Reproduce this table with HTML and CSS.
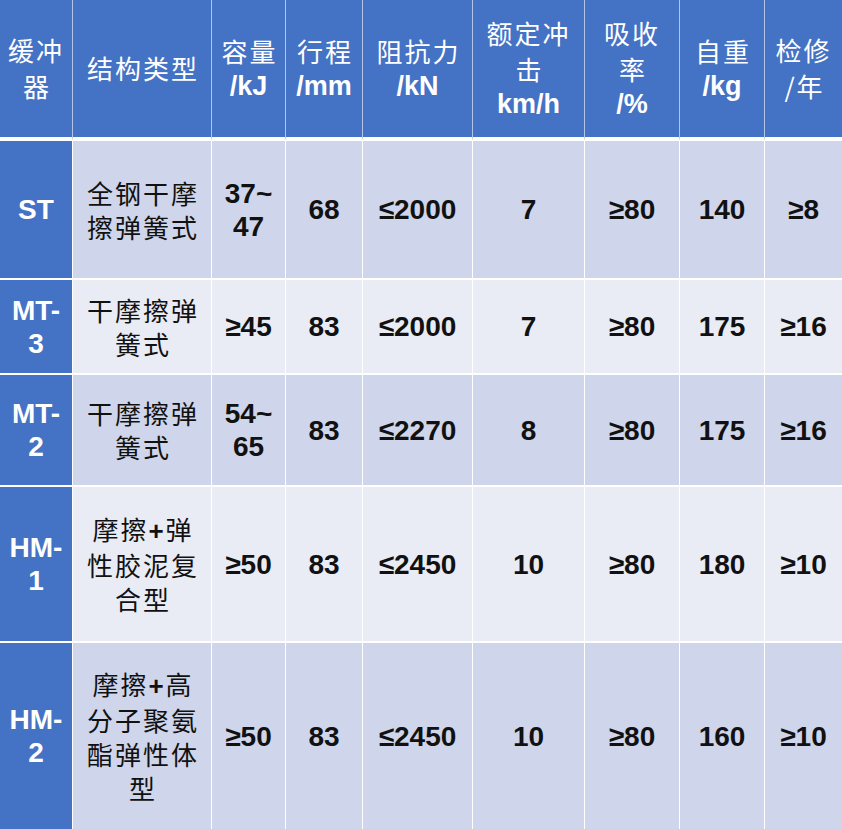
FILE: index.html
```html
<!DOCTYPE html>
<html lang="zh-CN">
<head>
<meta charset="utf-8">
<title>缓冲器参数表</title>
<link rel="stylesheet" href="styles.css">
</head>
<body>
<table class="spec">
  <colgroup>
    <col class="c1"><col class="c2"><col class="c3"><col class="c4"><col class="c5"><col class="c6"><col class="c7"><col class="c8"><col class="c9">
  </colgroup>
  <thead>
    <tr class="head">
      <th><span class="zh">缓冲<br>器</span></th>
      <th><span class="zh">结构类型</span></th>
      <th><span class="zh">容量</span><br><b>/kJ</b></th>
      <th><span class="zh">行程</span><br><b>/mm</b></th>
      <th><span class="zh">阻抗力</span><br><b>/kN</b></th>
      <th><span class="zh">额定冲<br>击</span><br><b>km/h</b></th>
      <th><span class="zh">吸收<br>率</span><br><b>/%</b></th>
      <th><span class="zh">自重</span><br><b>/kg</b></th>
      <th><span class="zh">检修<br>/年</span></th>
    </tr>
  </thead>
  <tbody>
    <tr class="r1 dark">
      <th>ST</th>
      <td class="type">全钢干摩<br>擦弹簧式</td>
      <td>37~<br>47</td><td>68</td><td>≤2000</td><td>7</td><td>≥80</td><td>140</td><td>≥8</td>
    </tr>
    <tr class="r2 light">
      <th>MT-<br>3</th>
      <td class="type">干摩擦弹<br>簧式</td>
      <td>≥45</td><td>83</td><td>≤2000</td><td>7</td><td>≥80</td><td>175</td><td>≥16</td>
    </tr>
    <tr class="r3 dark">
      <th>MT-<br>2</th>
      <td class="type">干摩擦弹<br>簧式</td>
      <td>54~<br>65</td><td>83</td><td>≤2270</td><td>8</td><td>≥80</td><td>175</td><td>≥16</td>
    </tr>
    <tr class="r4 light">
      <th>HM-<br>1</th>
      <td class="type">摩擦<b>+</b>弹<br>性胶泥复<br>合型</td>
      <td>≥50</td><td>83</td><td>≤2450</td><td>10</td><td>≥80</td><td>180</td><td>≥10</td>
    </tr>
    <tr class="r5 dark last">
      <th>HM-<br>2</th>
      <td class="type">摩擦<b>+</b>高<br>分子聚氨<br>酯弹性体<br>型</td>
      <td>≥50</td><td>83</td><td>≤2450</td><td>10</td><td>≥80</td><td>160</td><td>≥10</td>
    </tr>
  </tbody>
</table>
</body>
</html>
```

FILE: styles.css
```css
html, body {
  margin: 0;
  padding: 0;
  background: #ffffff;
}

.spec {
  width: 842px;
  table-layout: fixed;
  border-collapse: separate;
  border-spacing: 0;
  font-family: "Liberation Sans", "Noto Sans CJK SC", sans-serif;
}

.c1 { width: 73px; }
.c2 { width: 139px; }
.c3 { width: 74px; }
.c4 { width: 77px; }
.c5 { width: 110px; }
.c6 { width: 112px; }
.c7 { width: 95px; }
.c8 { width: 85px; }
.c9 { width: 77px; }

.spec th,
.spec td {
  padding: 0;
  text-align: center;
  vertical-align: middle;
  white-space: nowrap;
  border-right: 1px solid #ffffff;
  border-bottom: 2px solid #ffffff;
}

.spec th:last-child,
.spec td:last-child {
  border-right: none;
}

.spec tr.last th,
.spec tr.last td {
  border-bottom: none;
}

/* header row */
.head th {
  background: #4472c4;
  color: #ffffff;
  font-weight: normal;
  font-size: 27px;
  line-height: 33px;
  border-bottom: 4px solid #ffffff;
  border-right-color: #b4c4e6;
}

.head th b {
  font-weight: bold;
}

.zh {
  font-family: "Noto Sans CJK SC", sans-serif;
  font-size: 26px;
  letter-spacing: 2px;
  margin-right: -2px;
}

.head { height: 141px; }
.r1 { height: 139px; }
.r2 { height: 95px; }
.r3 { height: 112px; }
.r4 { height: 156px; }
.r5 { height: 186px; }

/* body */
tbody th {
  background: #4472c4;
  color: #ffffff;
  font-weight: bold;
  font-size: 28px;
  line-height: 33px;
}

tbody td {
  color: #111111;
  font-weight: bold;
  font-size: 28px;
  line-height: 33px;
}

.dark td { background: #cfd5ea; }
.light td { background: #e9ebf5; }

td.type {
  font-family: "Noto Sans CJK SC", sans-serif;
  font-weight: normal;
  font-size: 26px;
  letter-spacing: 2px;
  line-height: 34px;
  padding-left: 2px;
}

td.type b {
  font-family: "Liberation Sans", sans-serif;
  font-weight: bold;
}
```
